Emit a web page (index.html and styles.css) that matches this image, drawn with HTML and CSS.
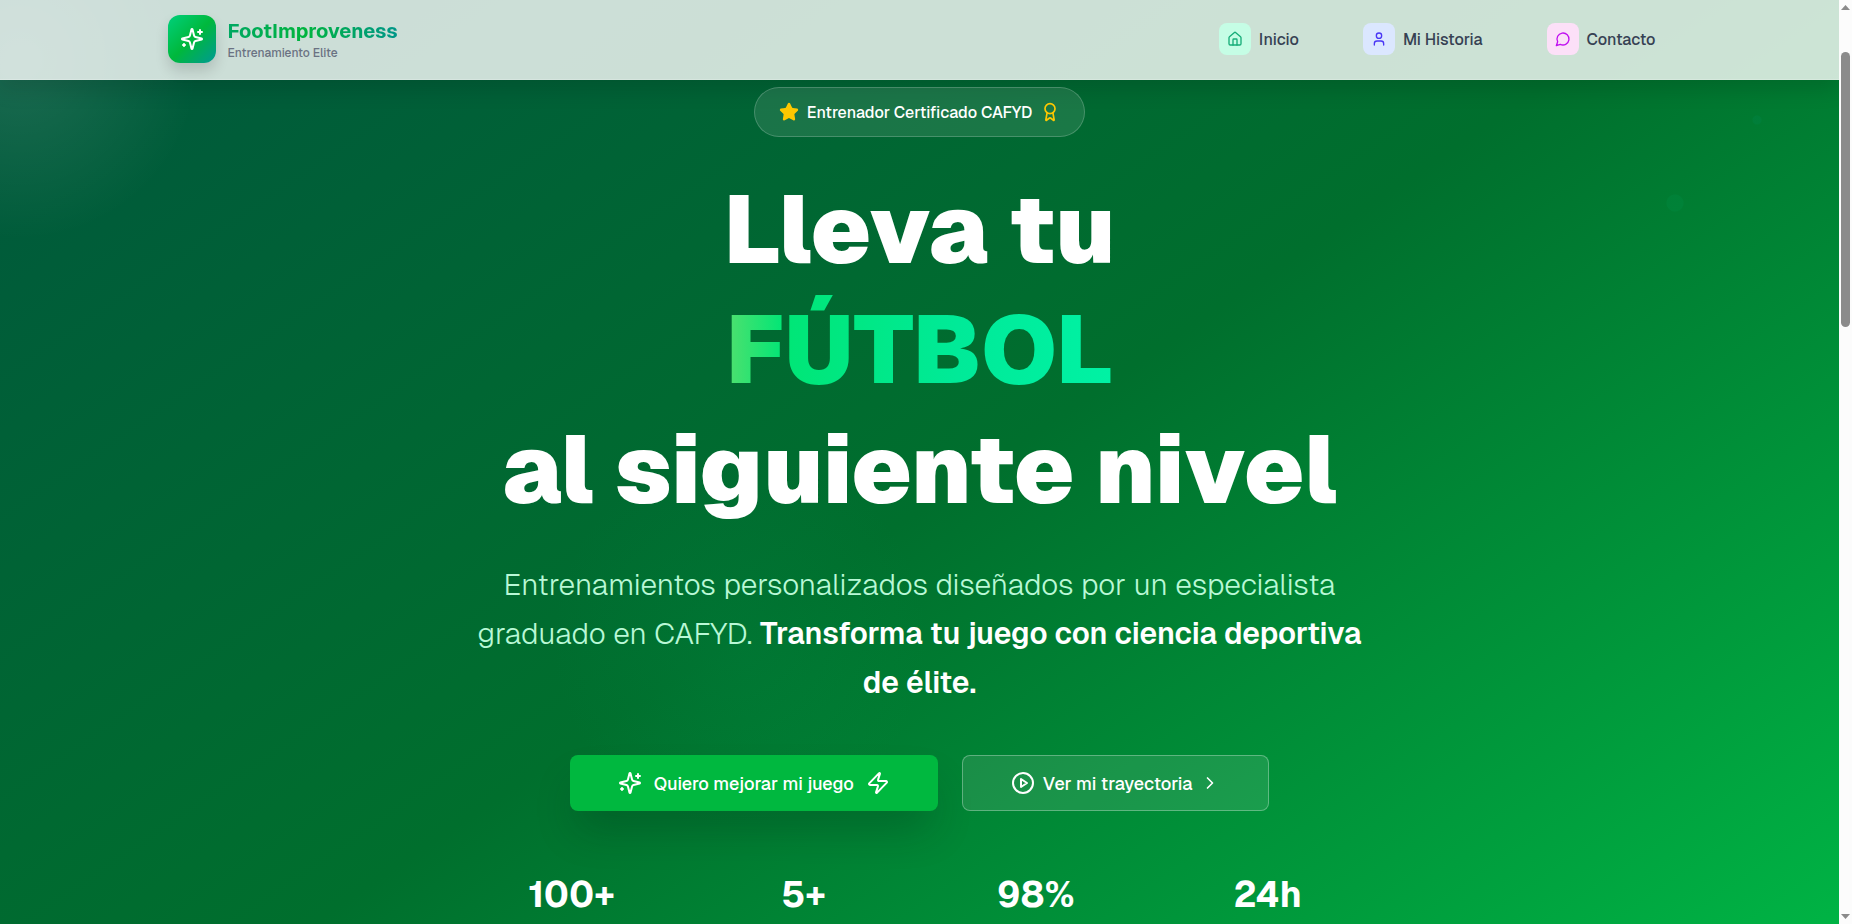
FILE: index.html
```html
<!DOCTYPE html>
<html lang="es">
<head>
<meta charset="utf-8">
<meta name="viewport" content="width=device-width, initial-scale=1">
<title>FootImproveness</title>
<link rel="stylesheet" href="styles.css">
</head>
<body>
<svg class="sprite" aria-hidden="true">
  <symbol id="sparkles" viewBox="0 0 24 24"><path d="M9.937 15.5A2 2 0 0 0 8.5 14.063l-6.135-1.582a.5.5 0 0 1 0-.962L8.5 9.936A2 2 0 0 0 9.937 8.5l1.582-6.135a.5.5 0 0 1 .963 0L14.063 8.5A2 2 0 0 0 15.5 9.937l6.135 1.581a.5.5 0 0 1 0 .964L15.5 14.063a2 2 0 0 0-1.437 1.437l-1.582 6.135a.5.5 0 0 1-.963 0z"/><path d="M20 3v4M22 5h-4M4 17v2M5 18H3"/></symbol>
  <symbol id="house" viewBox="0 0 24 24"><path d="M15 21v-8a1 1 0 0 0-1-1h-4a1 1 0 0 0-1 1v8"/><path d="M3 10a2 2 0 0 1 .709-1.528l7-5.999a2 2 0 0 1 2.582 0l7 5.999A2 2 0 0 1 21 10v9a2 2 0 0 1-2 2H5a2 2 0 0 1-2-2z"/></symbol>
  <symbol id="user" viewBox="0 0 24 24"><path d="M19 21v-2a4 4 0 0 0-4-4H9a4 4 0 0 0-4 4v2"/><circle cx="12" cy="7" r="4"/></symbol>
  <symbol id="message" viewBox="0 0 24 24"><path d="M7.9 20A9 9 0 1 0 4 16.1L2 22Z"/></symbol>
  <symbol id="star" viewBox="0 0 24 24"><path d="M11.525 2.295a.53.53 0 0 1 .95 0l2.31 4.679a2.123 2.123 0 0 0 1.595 1.16l5.166.756a.53.53 0 0 1 .294.904l-3.736 3.638a2.123 2.123 0 0 0-.611 1.878l.882 5.14a.53.53 0 0 1-.771.56l-4.618-2.428a2.122 2.122 0 0 0-1.973 0L6.396 21.01a.53.53 0 0 1-.77-.56l.881-5.139a2.122 2.122 0 0 0-.611-1.879L2.16 9.795a.53.53 0 0 1 .294-.906l5.165-.755a2.122 2.122 0 0 0 1.597-1.16z"/></symbol>
  <symbol id="award" viewBox="0 0 24 24"><path d="m15.477 12.89 1.515 8.526a.5.5 0 0 1-.81.47l-3.58-2.687a1 1 0 0 0-1.197 0l-3.586 2.686a.5.5 0 0 1-.81-.469l1.514-8.526"/><circle cx="12" cy="8" r="6"/></symbol>
  <symbol id="zap" viewBox="0 0 24 24"><path d="M4 14a1 1 0 0 1-.78-1.63l9.9-10.2a.5.5 0 0 1 .86.46l-1.92 6.02A1 1 0 0 0 13 10h7a1 1 0 0 1 .78 1.63l-9.9 10.2a.5.5 0 0 1-.86-.46l1.92-6.02A1 1 0 0 0 11 14z"/></symbol>
  <symbol id="play" viewBox="0 0 24 24"><circle cx="12" cy="12" r="10"/><path d="m10 8 6 4-6 4z"/></symbol>
  <symbol id="chevron" viewBox="0 0 24 24"><path d="m9 18 6-6-6-6"/></symbol>
</svg>
<div class="window">
  <div class="page">
    <header class="header">
      <div class="header-inner">
        <a class="brand" href="#">
          <span class="brand-mark"><svg class="icon icon-lg"><use href="#sparkles"/></svg></span>
          <span class="brand-text">
            <span class="brand-name">FootImproveness</span>
            <span class="brand-tag">Entrenamiento Elite</span>
          </span>
        </a>
        <nav class="nav">
          <a class="nav-link" href="#inicio"><span class="nav-icon nav-icon-green"><svg class="icon icon-sm"><use href="#house"/></svg></span>Inicio</a>
          <a class="nav-link" href="#historia"><span class="nav-icon nav-icon-blue"><svg class="icon icon-sm"><use href="#user"/></svg></span>Mi Historia</a>
          <a class="nav-link" href="#contacto"><span class="nav-icon nav-icon-pink"><svg class="icon icon-sm"><use href="#message"/></svg></span>Contacto</a>
        </nav>
      </div>
    </header>
    <main class="hero">
      <p class="badge">
        <svg class="icon icon-md icon-filled"><use href="#star"/></svg>
        <span class="badge-text">Entrenador Certificado CAFYD</span>
        <svg class="icon icon-md"><use href="#award"/></svg>
      </p>
      <h1 class="title">Lleva tu<br><span class="title-accent">FÚTBOL</span><br>al siguiente nivel</h1>
      <p class="lead">Entrenamientos personalizados diseñados por un especialista graduado en CAFYD. <strong class="lead-strong">Transforma tu juego con ciencia deportiva de élite.</strong></p>
      <div class="actions">
        <button class="btn btn-primary" type="button"><svg class="icon icon-lg"><use href="#sparkles"/></svg>Quiero mejorar mi juego<svg class="icon icon-lg"><use href="#zap"/></svg></button>
        <button class="btn btn-glass" type="button"><svg class="icon icon-lg"><use href="#play"/></svg>Ver mi trayectoria<svg class="icon icon-md"><use href="#chevron"/></svg></button>
      </div>
      <div class="stats">
        <div class="stat">100+</div>
        <div class="stat">5+</div>
        <div class="stat">98%</div>
        <div class="stat">24h</div>
      </div>
    </main>
  </div>
  <div class="scrollbar" aria-hidden="true">
    <svg class="scroll-arrow" viewBox="0 0 9 5"><path d="M4.5 0 9 5H0z"/></svg>
    <div class="scroll-track"><div class="scroll-thumb"></div></div>
    <svg class="scroll-arrow" viewBox="0 0 9 5"><path d="M4.5 5 9 0H0z"/></svg>
  </div>
</div>
</body>
</html>
```
FILE: styles.css
```css
* { box-sizing: border-box; }

body {
  margin: 0;
  font-family: Geist, Inter, "Liberation Sans", sans-serif;
  color: #fff;
}

a { color: inherit; text-decoration: none; }

.sprite { display: none; }

.window {
  display: flex;
  height: 100vh;
  overflow: hidden;
}

.page {
  flex: 1;
  overflow: hidden;
  background:
    radial-gradient(circle at 1675px 203px, rgba(0, 150, 80, .2) 8px, transparent 9px),
    radial-gradient(circle at 1757px 120px, rgba(0, 140, 90, .2) 4px, transparent 5px),
    radial-gradient(circle at 20px 60px, rgba(255, 255, 255, .11), transparent 180px),
    radial-gradient(circle at 740px 640px, rgba(0, 160, 90, .12), transparent 190px),
    linear-gradient(to bottom right, #00543f 0%, #006037 22%, #006f2d 50%, #00c149 100%) 0 -114px / 100% 1250px;
}

.icon {
  flex: none;
  fill: none;
  stroke: currentColor;
  stroke-width: 2;
  stroke-linecap: round;
  stroke-linejoin: round;
}
.icon-sm { width: 16px; height: 16px; }
.icon-md { width: 20px; height: 20px; }
.icon-lg { width: 24px; height: 24px; }
.icon-filled { fill: currentColor; }

/* Header */
.header {
  background: rgba(255, 255, 255, .8);
  border-bottom: 1px solid rgba(255, 255, 255, .2);
  box-shadow: 0 10px 20px rgba(0, 0, 0, .12);
}
.header-inner {
  display: flex;
  align-items: center;
  justify-content: space-between;
  max-width: 1536px;
  margin: 0 auto;
  padding: 15px 16px 16px;
}
.brand { display: flex; align-items: center; gap: 12px; }
.brand-mark {
  display: grid;
  place-items: center;
  width: 48px;
  height: 48px;
  border-radius: 12px;
  background: linear-gradient(135deg, #00d07c, #00b83c 50%, #009a94);
  box-shadow: 0 8px 14px rgba(0, 0, 0, .14);
}
.brand-text { display: flex; flex-direction: column; }
.brand-name {
  font-size: 20px;
  font-weight: 700;
  line-height: 28px;
  color: transparent;
  background: linear-gradient(90deg, #00a862, #00b43e 45%, #009689);
  background-clip: text;
  -webkit-background-clip: text;
}
.brand-tag {
  font-size: 12px;
  font-weight: 500;
  line-height: 16px;
  color: #6a7282;
}
.nav { display: flex; gap: 32px; }
.nav-link {
  display: flex;
  align-items: center;
  gap: 8px;
  padding: 0 16px;
  font-size: 16px;
  font-weight: 500;
  color: #364153;
}
.nav-icon {
  display: grid;
  place-items: center;
  width: 32px;
  height: 32px;
  border-radius: 8px;
}
.nav-icon-green { background: #c5fde5; color: #16ad78; }
.nav-icon-blue { background: #dbe7ff; color: #4a36f5; }
.nav-icon-pink { background: #fce0f8; color: #c010f0; }

/* Hero */
.hero {
  display: flex;
  flex-direction: column;
  align-items: center;
  padding-top: 7px;
  text-align: center;
}
.badge {
  display: flex;
  align-items: center;
  gap: 8px;
  height: 50px;
  margin: 0;
  padding: 0 24px;
  border: 1px solid rgba(255, 255, 255, .2);
  border-radius: 25px;
  background: rgba(255, 255, 255, .1);
  color: #ffc800;
}
.badge-text {
  font-size: 16px;
  font-weight: 500;
  color: #fff;
}
.title {
  margin: 32px 0 0;
  font-size: 96px;
  font-weight: 900;
  line-height: 120px;
}
.title-accent {
  color: transparent;
  background: linear-gradient(90deg, #50e06e 0%, #00e676 15%, #00ea98 60%, #00f2a4 100%);
  background-clip: text;
  -webkit-background-clip: text;
}
.lead {
  max-width: 896px;
  margin: 31px 0 0;
  font-size: 30px;
  font-weight: 300;
  line-height: 49px;
  color: #b9f8d6;
}
.lead-strong { font-weight: 600; color: #fff; }
.actions { display: flex; gap: 24px; margin-top: 48px; }
.btn {
  display: flex;
  align-items: center;
  height: 56px;
  padding: 0 48px;
  border: 0;
  border-radius: 8px;
  font: inherit;
  font-size: 18px;
  font-weight: 500;
  color: #fff;
}
.btn-primary {
  gap: 12px;
  background: #00b83f;
  box-shadow: 0 24px 40px -8px rgba(0, 40, 20, .28);
}
.btn-glass {
  gap: 8px;
  border: 1px solid rgba(255, 255, 255, .3);
  background: rgba(255, 255, 255, .1);
}
.stats {
  display: grid;
  grid-template-columns: repeat(4, 1fr);
  gap: 32px;
  width: 100%;
  max-width: 896px;
  margin-top: 64px;
}
.stat {
  font-size: 36px;
  font-weight: 700;
  line-height: 40px;
}

/* Scrollbar */
.scrollbar {
  display: flex;
  flex-direction: column;
  align-items: center;
  width: 13px;
  padding: 5px 0;
  background: #fcfcfc;
}
.scroll-arrow { width: 9px; height: 5px; fill: #8b8b8b; }
.scroll-track { flex: 1; padding-top: 42px; }
.scroll-thumb {
  width: 9px;
  height: 275px;
  border-radius: 5px;
  background: #8b8b8b;
}
```
